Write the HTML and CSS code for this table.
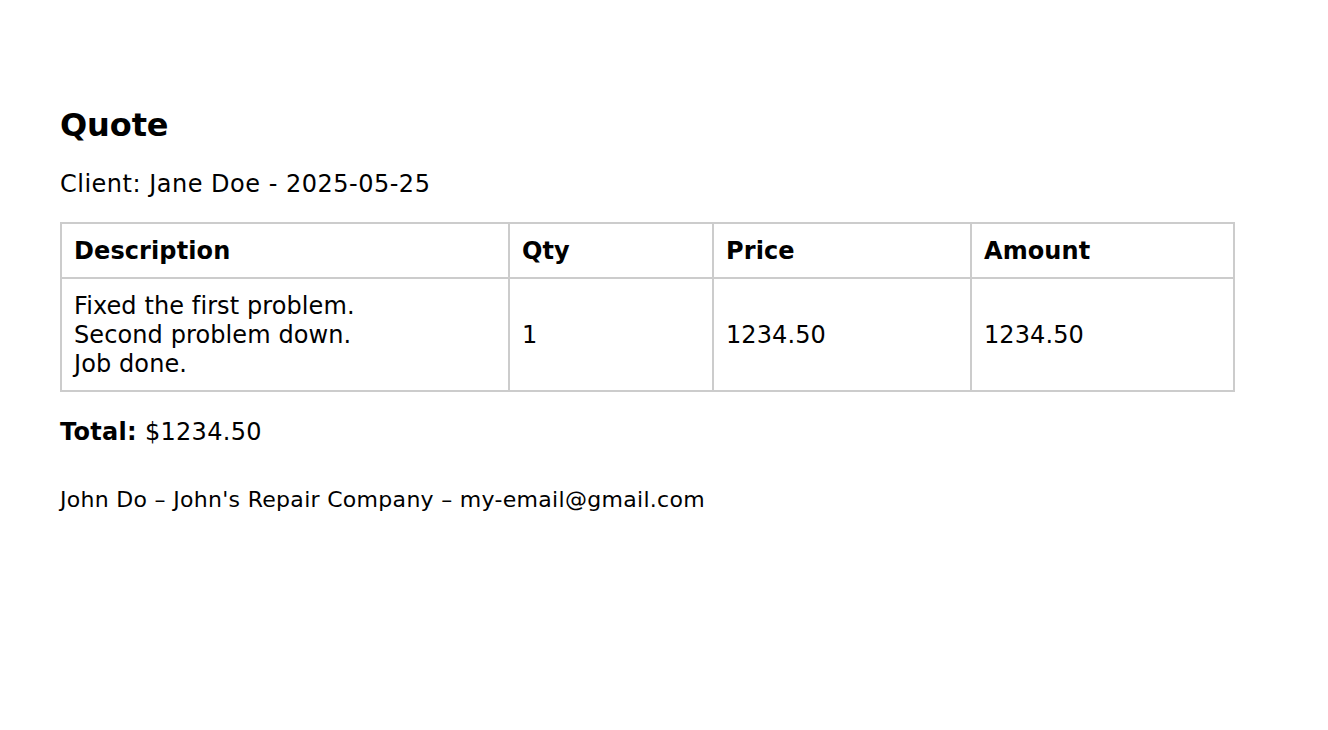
FILE: index.html
```html
<!DOCTYPE html>
<html>
<head>
<meta charset="utf-8">
<title>Quote</title>
<link rel="stylesheet" href="styles.css">
</head>
<body>
<div class="page">
  <h1 class="title">Quote</h1>
  <p class="client">Client: Jane Doe - 2025-05-25</p>
  <table class="items">
    <colgroup>
      <col class="c-desc">
      <col class="c-qty">
      <col class="c-price">
      <col class="c-amount">
    </colgroup>
    <thead>
      <tr>
        <th>Description</th>
        <th>Qty</th>
        <th>Price</th>
        <th>Amount</th>
      </tr>
    </thead>
    <tbody>
      <tr>
        <td>Fixed the first problem.<br>Second problem down.<br>Job done.</td>
        <td>1</td>
        <td>1234.50</td>
        <td>1234.50</td>
      </tr>
    </tbody>
  </table>
  <p class="total"><strong>Total:</strong> $1234.50</p>
  <p class="footer">John Do – John's Repair Company – my-email@gmail.com</p>
</div>
</body>
</html>
```

FILE: styles.css
```css
html, body {
  margin: 0;
  padding: 0;
  background: #ffffff;
}

body {
  font-family: "DejaVu Sans", Verdana, sans-serif;
  color: #000000;
}

.page {
  padding: 107px 60px 0 60px;
  width: 1173px;
}

.title {
  margin: 0;
  font-size: 32px;
  font-weight: bold;
  line-height: 37px;
  letter-spacing: -0.1px;
}

.client {
  margin: 26px 0 0 0;
  font-size: 24px;
  line-height: 29px;
  letter-spacing: 0.5px;
}

.items {
  margin-top: 23px;
  width: 1173px;
  border-collapse: collapse;
  table-layout: fixed;
  font-size: 24px;
  line-height: 29px;
}

.c-desc { width: 448px; }
.c-qty { width: 204px; }
.c-price { width: 258px; }
.c-amount { width: 263px; }

.items th,
.items td {
  border: 2px solid #cccccc;
  padding: 13px 12px 11px 12px;
  text-align: left;
  letter-spacing: 0.1px;
}

.items th {
  font-weight: bold;
}

.total {
  margin: 26px 0 0 0;
  font-size: 24px;
  line-height: 29px;
  letter-spacing: 0.3px;
}

.footer {
  margin: 38px 0 0 0;
  font-size: 22px;
  line-height: 29px;
  letter-spacing: 0.3px;
}
```
